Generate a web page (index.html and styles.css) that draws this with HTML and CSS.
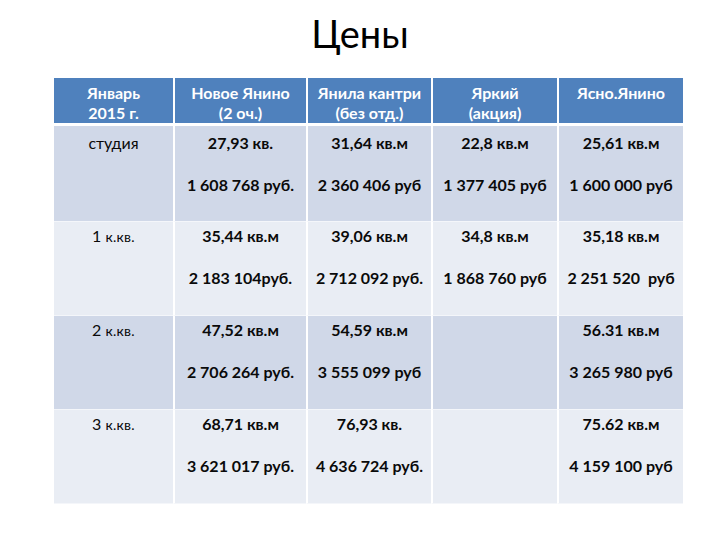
FILE: index.html
```html
<!DOCTYPE html>
<html lang="ru">
<head>
<meta charset="utf-8">
<title>Цены</title>
<link rel="stylesheet" href="styles.css">
</head>
<body>
<h1 class="title">Цены</h1>
<table class="prices">
  <colgroup>
    <col class="c1"><col class="c2"><col class="c3"><col class="c4"><col class="c5">
  </colgroup>
  <thead>
    <tr>
      <th>Январь<br>2015 г.</th>
      <th>Новое Янино<br>(2 оч.)</th>
      <th>Янила кантри<br>(без отд.)</th>
      <th>Яркий<br>(акция)</th>
      <th>Ясно.Янино</th>
    </tr>
  </thead>
  <tbody>
    <tr class="odd first">
      <td class="type">студия</td>
      <td><p>27,93 кв.</p><p>1 608 768 руб.</p></td>
      <td><p>31,64 кв.м</p><p>2 360 406 руб</p></td>
      <td><p>22,8 кв.м</p><p>1 377 405 руб</p></td>
      <td><p>25,61 кв.м</p><p>1 600 000 руб</p></td>
    </tr>
    <tr class="even">
      <td class="type">1 <span class="sm">к.кв.</span></td>
      <td><p>35,44 кв.м</p><p>2 183 104руб.</p></td>
      <td><p>39,06 кв.м</p><p>2 712 092 руб.</p></td>
      <td><p>34,8 кв.м</p><p>1 868 760 руб</p></td>
      <td><p>35,18 кв.м</p><p>2 251 520&nbsp; руб</p></td>
    </tr>
    <tr class="odd">
      <td class="type">2 <span class="sm">к.кв.</span></td>
      <td><p>47,52 кв.м</p><p>2 706 264 руб.</p></td>
      <td><p>54,59 кв.м</p><p>3 555 099 руб</p></td>
      <td></td>
      <td><p>56.31 кв.м</p><p>3 265 980 руб</p></td>
    </tr>
    <tr class="even">
      <td class="type">3 <span class="sm">к.кв.</span></td>
      <td><p>68,71 кв.м</p><p>3 621 017 руб.</p></td>
      <td><p>76,93 кв.</p><p>4 636 724 руб.</p></td>
      <td></td>
      <td><p>75.62 кв.м</p><p>4 159 100 руб</p></td>
    </tr>
  </tbody>
</table>
</body>
</html>
```

FILE: styles.css
```css
html, body {
  margin: 0;
  padding: 0;
  background: #ffffff;
}
body {
  width: 720px;
  height: 540px;
  font-family: Lato, "Open Sans", sans-serif;
  color: #0a0a0a;
  overflow: hidden;
}
.title {
  box-sizing: border-box;
  height: 78px;
  margin: 0;
  padding-top: 14px;
  font-size: 38px;
  line-height: 38px;
  font-weight: 400;
  text-align: center;
  color: #000000;
}
.prices {
  margin-left: 54px;
  width: 629px;
  table-layout: fixed;
  border-collapse: separate;
  border-spacing: 0;
}
.c1 { width: 119px; }
.c2 { width: 133px; }
.c3 { width: 125px; }
.c4 { width: 126px; }
.c5 { width: 126px; }

.prices th {
  box-sizing: border-box;
  height: 47px;
  padding: 5px 2px 0;
  vertical-align: top;
  background: #4f81bd;
  color: #ffffff;
  font-size: 16px;
  line-height: 20px;
  font-weight: 700;
  text-align: center;
  border-bottom: 3px solid #ffffff;
}
.prices th + th,
.prices td + td {
  border-left: 2px solid #ffffff;
}
.prices td {
  box-sizing: border-box;
  height: 94px;
  padding: 4px 2px 0;
  vertical-align: top;
  text-align: center;
  font-size: 16px;
  line-height: 20px;
  font-weight: 700;
  border-bottom: 1px solid #f4f6fa;
}
.prices tr.first td {
  padding-top: 7px;
  height: 96px;
}
.prices td p {
  margin: 0;
  white-space: nowrap;
}
.prices td p + p {
  margin-top: 22px;
}
.prices td.type {
  font-weight: 400;
  font-size: 16px;
}
.sm {
  font-size: 14px;
  letter-spacing: 0.3px;
}
.odd td { background: #d0d8e8; }
.even td { background: #e9edf4; }
```
